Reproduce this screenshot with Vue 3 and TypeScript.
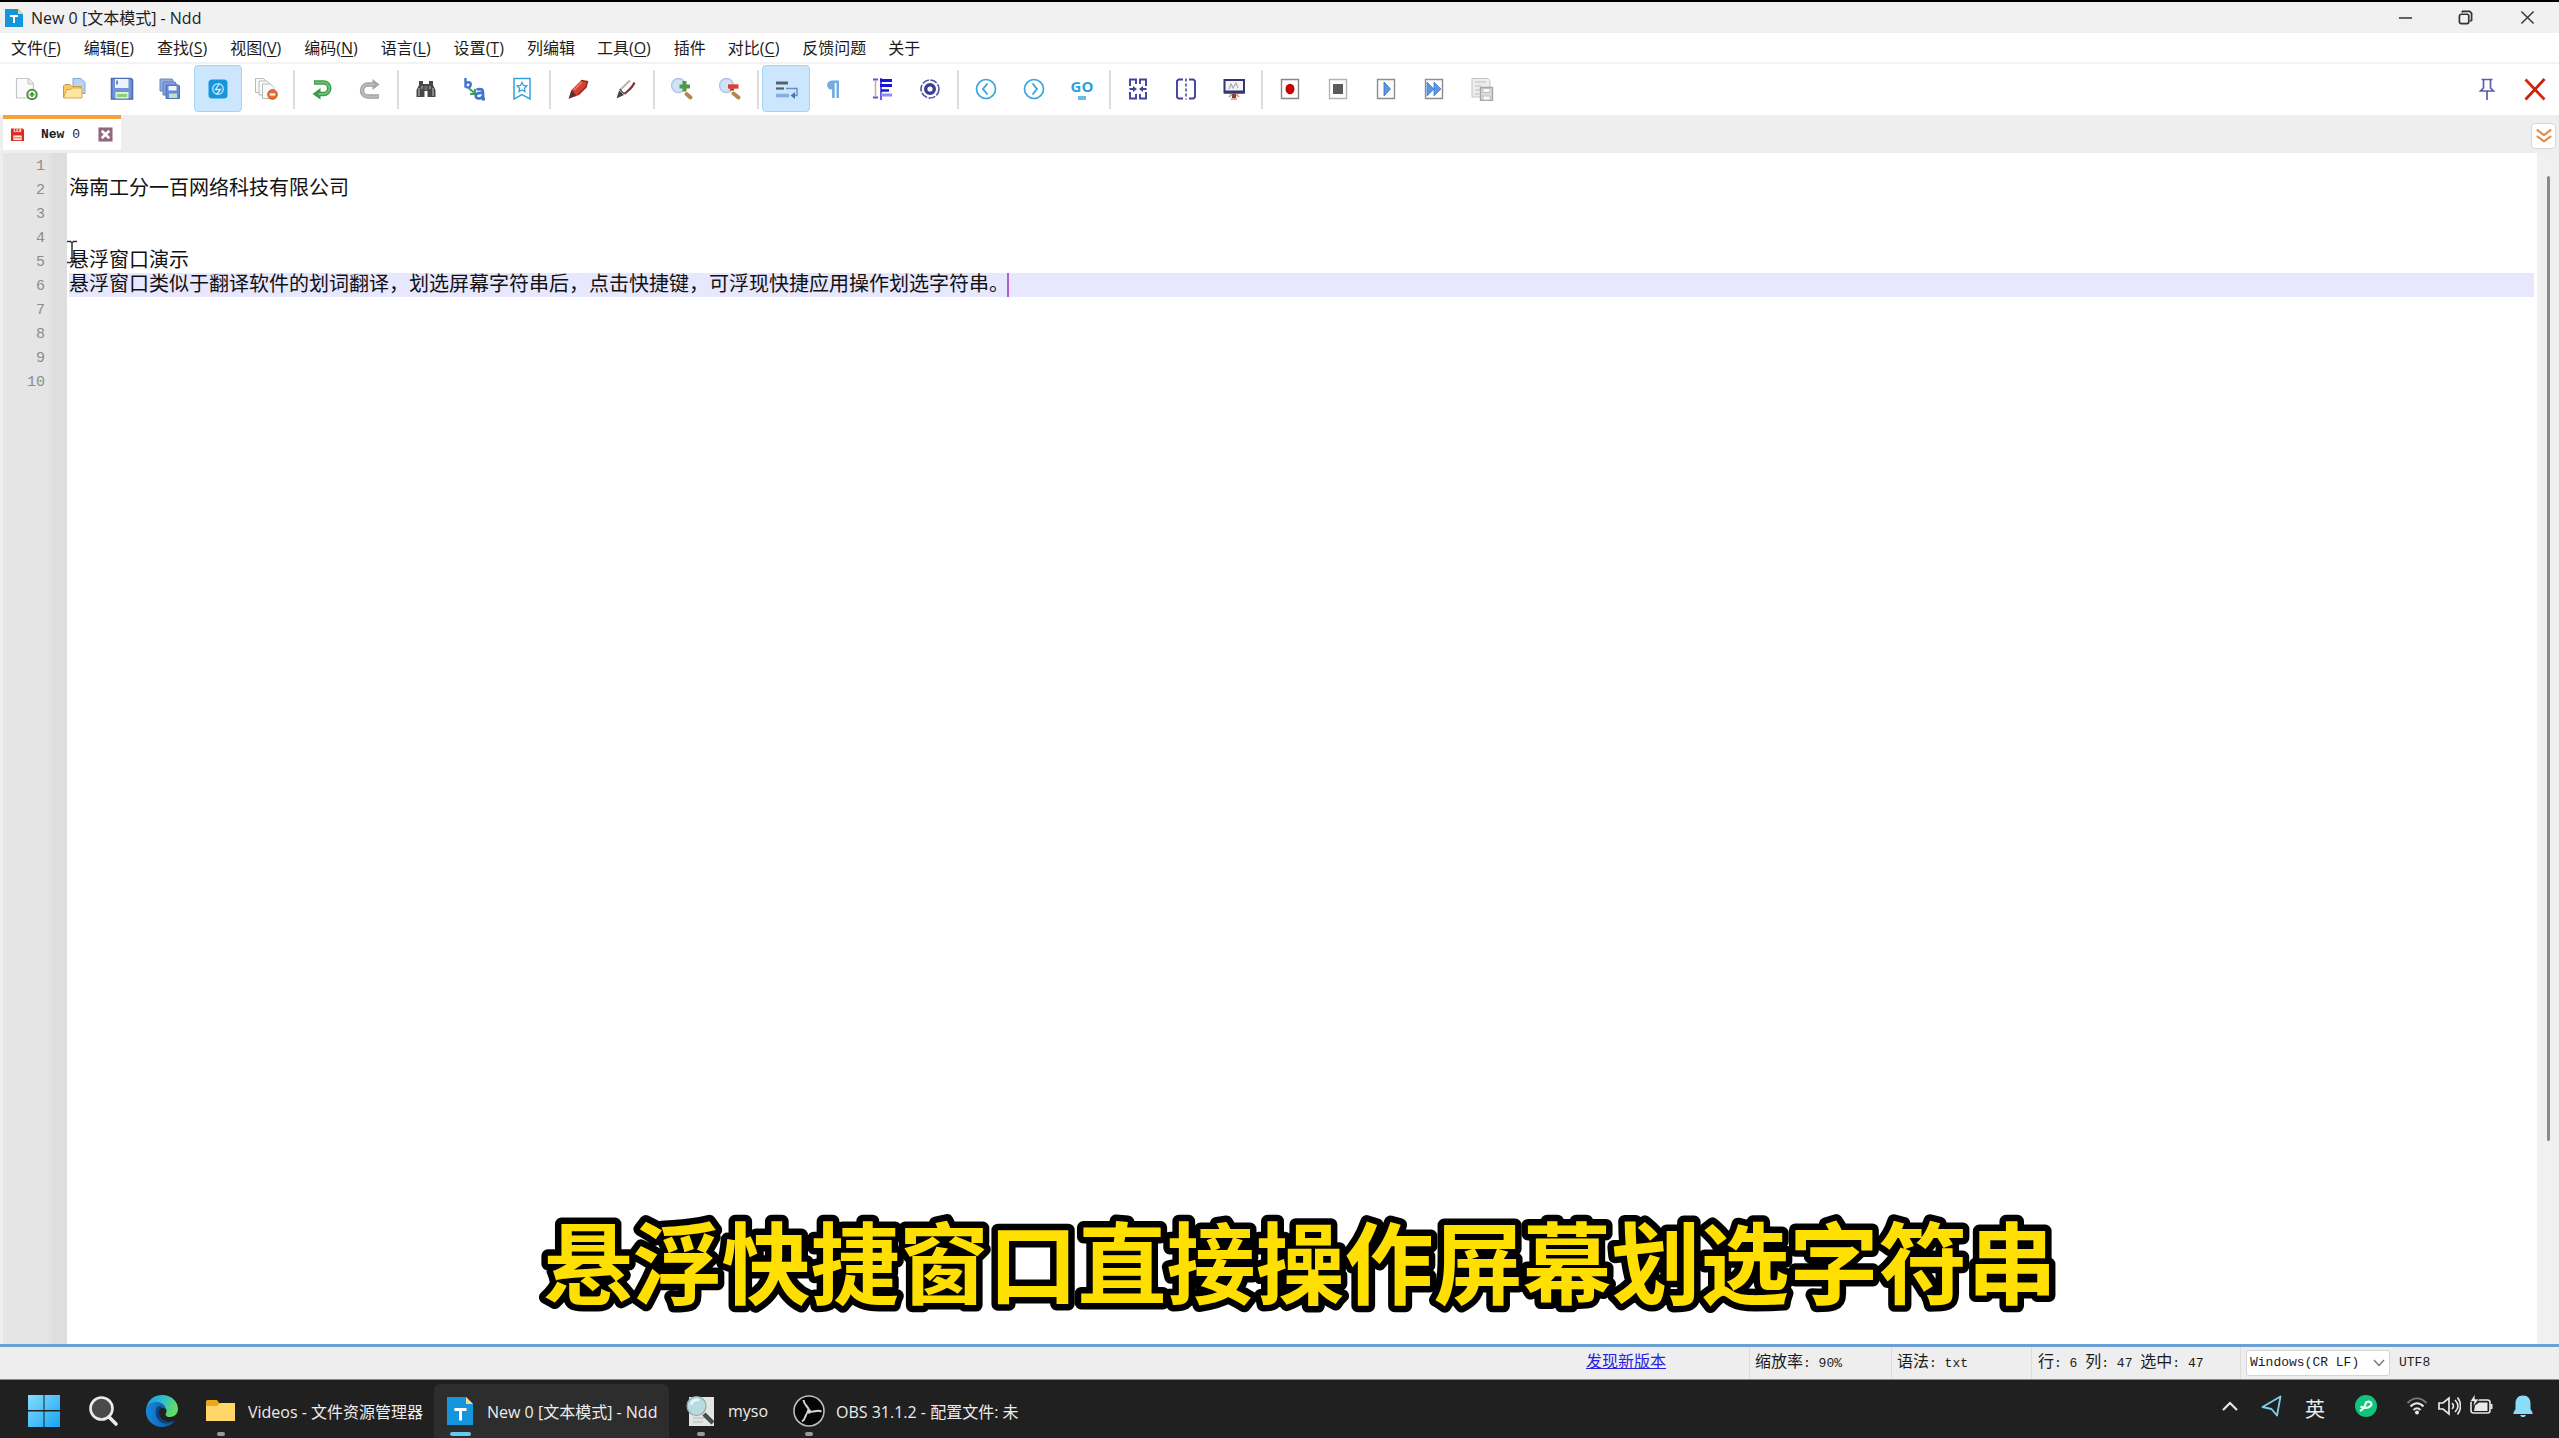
<script setup lang="ts">
import { ref } from 'vue'

interface Tool {
  icon: string
  label: string
  active?: boolean
}

const icons: Record<string, string> = {
  newFile:
    '<path d="M2.500 1.500h12l5 5v14.500h-17z" fill="#fbfbfb" stroke="#c6c6c6" stroke-width="1.200"/><path d="M14 1.500v5.500h5.500" fill="#eee" stroke="#c6c6c6"/><circle cx="18" cy="17.500" r="4.700" fill="#fff" stroke="#4f9140" stroke-width="2"/><path d="M18 15v5M15.500 17.500h5" stroke="#4f9140" stroke-width="1.800"/>',
  open:
    '<path d="M11 1.500h8l4 4v11H11z" fill="#b9d3f3" stroke="#7ea6dc"/><path d="M1.500 20.500V9l1.500-1.500h5l2 2h9.500v11z" fill="#f6cb66" stroke="#cf9838"/><path d="M1.500 21l3-8.500h4l2-1.500h9.500v10z" fill="#fde6a2" stroke="#d9a748"/>',
  save:
    '<path d="M1.500 1.500h19.500l1.500 1.500v19H1.500z" fill="#7193dc" stroke="#4d6cb4" stroke-width="1.600"/><path d="M5 2h13.500v9H5z" fill="#edf3fd"/><path d="M7 3.500v4" stroke="#536fb0" stroke-width="1.600"/><path d="M5.500 15h13v6.500h-13z" fill="#dcf2d3"/><path d="M7 17h10v3H7z" fill="#8bcf78"/>',
  saveAll:
    '<path d="M2 2h12l1 1v11H2z" fill="#93aee0" stroke="#6b87c2"/><path d="M5 5h12l1 1v12H5z" fill="#87a5e0" stroke="#5e7dbf"/><path d="M8 8h12.500l1 1v12.500H8z" fill="#668bd8" stroke="#4e6fb8"/><path d="M10.500 9h8v4.500h-8z" fill="#edf3fd"/><path d="M11 16.500h8v4.500h-8z" fill="#bfe5b4"/>',
  sync:
    '<rect x="2.500" y="2.500" width="19" height="19" rx="3.500" fill="#1595dc"/><circle cx="12" cy="12" r="5.300" fill="none" stroke="#a9dcf7" stroke-width="1.500"/><path d="M13.500 6.500l-4 6h5l-4 5" fill="none" stroke="#d6effb" stroke-width="1.300"/>',
  closeAll:
    '<g fill="#fafafa" stroke="#b9b9b9"><path d="M1.500 1.500h8l3 3v11h-11z"/><path d="M5 4h8l3 3v11H5z"/><path d="M8.500 7h8l3.500 3.500v11H8.500z"/></g><circle cx="18.500" cy="17.500" r="4.800" fill="#e66f25" stroke="#c5551a"/><path d="M15.700 17.500h5.600" stroke="#fff" stroke-width="2"/>',
  undo:
    '<path d="M4 5.500h9.500a5 5 0 0 1 0 11.500H9" fill="none" stroke="#3e9a48" stroke-width="4.600"/><path d="M10.500 11v11.500L2.500 17z" fill="#3e9a48"/><path d="M5 5.500h8.500a5 5 0 0 1 0 11.500H8" fill="none" stroke="#6dc06f" stroke-width="2"/>',
  redo:
    '<path d="M21 19.500H10a5.300 5.300 0 0 1 0-12h6" fill="none" stroke="#9f9f9f" stroke-width="4.400"/><path d="M14.500 2v11l7-5.500z" fill="#a5a5a5"/><path d="M20.500 19.500H10a5.300 5.300 0 0 1 0-12h7" fill="none" stroke="#bebebe" stroke-width="2"/>',
  find:
    '<path d="M5 4h4v3h6V4h4v4l2.500 5v7h-8v-6h-3v6h-8v-7L5 8z" fill="#474747"/><path d="M5 11v8M19 11v8M8 9v3M16 9v3" stroke="#9a9a9a" stroke-width="1.500"/><path d="M10.500 9h3v4h-3z" fill="#6f6f6f"/>',
  replace:
    '<path d="M3.500 1v9.500M3.500 6.500c3-2.500 6-1 5 2s-4 2.500-5 .5" fill="none" stroke="#3f74d2" stroke-width="2.400"/><path d="M7 11.500l5 4M8 17h5v-5" fill="none" stroke="#4a9c52" stroke-width="2.200"/><path d="M14.500 12.500c6-1.500 6.500.5 6.500 4v5.500h2M21 16c-6-.5-8 1.500-7 4s6 1.500 7-1" fill="none" stroke="#3f74d2" stroke-width="2.800"/>',
  bookmark:
    '<path d="M4 1.500h16v20.500l-8-4.500-8 4.500z" fill="none" stroke="#35a2dc" stroke-width="1.500"/><path d="M12 5.500l1.500 3 3.300.4-2.400 2.300.6 3.300-3-1.600-3 1.600.6-3.300-2.400-2.300 3.300-.4z" fill="none" stroke="#35a2dc" stroke-width="1.300"/>',
  markRed:
    '<path d="M3 21l2.500-8L15 3.500l6.500 1L20 10l-9 9z" fill="#d9402c"/><path d="M15 3.500l6.500 1L20 10l-8 8" fill="none" stroke="#8d2a22" stroke-width="1.500"/><path d="M2.500 22l3-9 5 5.500z" fill="#533"/><path d="M8 13l8-8" stroke="#f2796a" stroke-width="1.700"/>',
  markClear:
    '<path d="M6 13L16 3.500" stroke="#b5b5b5" stroke-width="2"/><path d="M20.500 5.500c-2 5-5 7-9.500 11" fill="none" stroke="#88333b" stroke-width="2.200"/><path d="M6 12c1.500 3.500 3 4.500 6 4.500" fill="none" stroke="#555" stroke-width="1.800"/><path d="M2.500 21.500l2.500-8 5 4.500z" fill="#444"/>',
  zoomIn:
    '<circle cx="8.500" cy="8.500" r="7" fill="#cfe2f7" stroke="#a9c6e6" stroke-width="1.400"/><path d="M16.500 17l4 3.500" stroke="#ba8548" stroke-width="4" stroke-linecap="round"/><path d="M14.500 4v10.500M9.500 9.500h10.500" stroke="#4f9a47" stroke-width="4"/>',
  zoomOut:
    '<circle cx="8.500" cy="8.500" r="7" fill="#cfe2f7" stroke="#a9c6e6" stroke-width="1.400"/><path d="M15.500 16.500l5 4" stroke="#ba8548" stroke-width="4" stroke-linecap="round"/><path d="M10 9.500h10.500" stroke="#de4034" stroke-width="4.400"/><path d="M12 12.500h4" stroke="#b3302b" stroke-width="2"/>',
  wrap:
    '<path d="M2 6h12" stroke="#56616d" stroke-width="3"/><path d="M2 11.500h8" stroke="#56616d" stroke-width="2.200"/><path d="M12 11.500h11v7h-3.500" fill="none" stroke="#668dc4" stroke-width="1.400"/><path d="M21 15v7l-4.500-3.500z" fill="#4a75b5"/><path d="M2 18.500h13" stroke="#86aee2" stroke-width="3.600"/>',
  pilcrow:
    '<path d="M6.500 3.500H17V21h-2.500V6h-1.800v15H10v-8.500C3.500 13 3.500 3.500 10 3.500z" fill="#73abe2"/>',
  indent:
    '<path d="M3 2.500h5M3 20.500h5" stroke="#5553e8" stroke-width="2"/><path d="M5.500 4v15" stroke="#dfa08d" stroke-width="1.500"/><path d="M11 1v22" stroke="#4e4be0" stroke-width="1.800"/><path d="M10 3.500h12M10 8.500h12" stroke="#1a14df" stroke-width="3"/><path d="M11 13.500h8" stroke="#1a14df" stroke-width="2.500"/><path d="M11 18h11" stroke="#8f8df5" stroke-width="3"/>',
  monitor:
    '<circle cx="12" cy="12" r="9" fill="none" stroke="#55559c" stroke-width="1.600" stroke-dasharray="7 1.500"/><circle cx="12" cy="12" r="4.300" fill="none" stroke="#3c3c90" stroke-width="3.400"/>',
  prev:
    '<circle cx="12" cy="12" r="9.500" fill="none" stroke="#3aa6db" stroke-width="1.700"/><path d="M13.500 6.500L9 12l4.500 5.500" fill="none" stroke="#3aa6db" stroke-width="1.900"/>',
  next:
    '<circle cx="12" cy="12" r="9.500" fill="none" stroke="#3aa6db" stroke-width="1.700"/><path d="M10.500 6.500L15 12l-4.500 5.500" fill="none" stroke="#3aa6db" stroke-width="1.900"/>',
  split:
    '<g fill="none" stroke="#42429a" stroke-width="1.900"><path d="M10 7V2.500H4V9M4 15v6.500h6V17M14 7V2.500h6V9M20 15v6.500h-6V17"/><path d="M3.500 12H8M20.500 12H16"/></g><path d="M7 9l4 3-4 3zM17 9l-4 3 4 3z" fill="#42429a"/>',
  columns:
    '<path d="M9 2.500H4.500L3 4v16l1.500 1.500H9M15 2.500h4.500L21 4v16l-1.500 1.500H15" fill="none" stroke="#42429a" stroke-width="1.900"/><path d="M12 1.500v21" stroke="#42429a" stroke-width="1.500" stroke-dasharray="3 2"/>',
  screen:
    '<path d="M2.500 3h19.500v12.500H2.500z" fill="#f4f4f8" stroke="#35356f" stroke-width="2"/><path d="M2 15h20.500" stroke="#35356f" stroke-width="3"/><path d="M7 12l2-5 2 4 3-5 2 5" fill="none" stroke="#aaaab8" stroke-width="1.200"/><path d="M10 17h4v4h-4z" fill="#7d4040"/><path d="M7 20l3-3M17 20l-3-3M9 22h6" stroke="#d3946f" stroke-width="1.600"/>',
  record:
    '<path d="M3.500 2.500h17v19h-17z" fill="#fdfdfd" stroke="#8b8585" stroke-width="1.400"/><ellipse cx="12" cy="12" rx="4.500" ry="5.200" fill="#c80000"/>',
  stop:
    '<path d="M3.500 2.500h17v19h-17z" fill="#fdfdfd" stroke="#b5b5b5" stroke-width="1.400"/><path d="M7 7h10v10H7z" fill="#5b5b5b"/>',
  play:
    '<path d="M3.500 2.500h17v19h-17z" fill="#fdfdfd" stroke="#8d8d8d" stroke-width="1.400"/><path d="M10 5l6.500 7-6.500 7z" fill="#5c96e6" stroke="#356fc3" stroke-width=".8"/>',
  playAll:
    '<path d="M3.500 2.500h17v19h-17z" fill="#fdfdfd" stroke="#8d8d8d" stroke-width="1.400"/><path d="M5 5l7 7-7 7zM12 5l7 7-7 7z" fill="#5c96e6" stroke="#4180d2" stroke-width=".8"/>',
  saveMacro:
    '<path d="M2 1.500h16l2 2V20H2z" fill="#ededed" stroke="#c5c5c5"/><path d="M5 5h11M5 9h6M5 13h5M5 17h4" stroke="#cecece" stroke-width="1.500"/><path d="M10.500 10.500h12v13h-12z" fill="#dcdcdc" stroke="#a5a5a5" stroke-width="1.400"/><path d="M13 11.500h7v4h-7zM13 19h7v4h-7z" fill="#fafafa" stroke="#b5b5b5" stroke-width=".8"/>',
  pin:
    '<path d="M6.500 2.500h11M8.500 3v8l-3 3h13l-3-3V3M12 14v9" fill="none" stroke="#5c5cae" stroke-width="1.700"/>',
  closeRed:
    '<path d="M2.500 2.500l19 20" stroke="#d72814" stroke-width="2.800"/><path d="M21.500 2L2.500 22.500" stroke="#c52010" stroke-width="2.800"/>'
}

const menus: [string, string][] = [
  ['文件', 'F'], ['编辑', 'E'], ['查找', 'S'], ['视图', 'V'], ['编码', 'N'], ['语言', 'L'], ['设置', 'T'],
  ['列编辑', ''], ['工具', 'O'], ['插件', ''], ['对比', 'C'], ['反馈问题', ''], ['关于', '']
]

const toolGroups: Tool[][] = [
  [
    { icon: 'newFile', label: '新建' },
    { icon: 'open', label: '打开' },
    { icon: 'save', label: '保存' },
    { icon: 'saveAll', label: '全部保存' },
    { icon: 'sync', label: '自动同步', active: true },
    { icon: 'closeAll', label: '全部关闭' }
  ],
  [
    { icon: 'undo', label: '撤销' },
    { icon: 'redo', label: '重做' }
  ],
  [
    { icon: 'find', label: '查找' },
    { icon: 'replace', label: '替换' },
    { icon: 'bookmark', label: '书签' }
  ],
  [
    { icon: 'markRed', label: '标记' },
    { icon: 'markClear', label: '清除标记' }
  ],
  [
    { icon: 'zoomIn', label: '放大' },
    { icon: 'zoomOut', label: '缩小' }
  ],
  [
    { icon: 'wrap', label: '自动换行', active: true },
    { icon: 'pilcrow', label: '显示空白' },
    { icon: 'indent', label: '缩进线' },
    { icon: 'monitor', label: '监视' }
  ],
  [
    { icon: 'prev', label: '上一处' },
    { icon: 'next', label: '下一处' },
    { icon: 'go', label: '跳转' }
  ],
  [
    { icon: 'split', label: '合并视图' },
    { icon: 'columns', label: '分栏' },
    { icon: 'screen', label: '十六进制' }
  ],
  [
    { icon: 'record', label: '录制宏' },
    { icon: 'stop', label: '停止录制' },
    { icon: 'play', label: '播放宏' },
    { icon: 'playAll', label: '多次播放' },
    { icon: 'saveMacro', label: '保存宏' }
  ]
]

const text = ref(
  [
    '',
    '海南工分一百网络科技有限公司',
    '',
    '',
    '悬浮窗口演示',
    '悬浮窗口类似于翻译软件的划词翻译，划选屏幕字符串后，点击快捷键，可浮现快捷应用操作划选字符串。',
    '', '', '', ''
  ].join('\n')
)

const eol = ref('Windows(CR LF)')

// Chinese and Latin runs are set in different sizes in the status bar.
const runs = (s: string) => s.split(/([\u4e00-\u9fff]+)/).filter(Boolean)
const isHan = (s: string) => /[\u4e00-\u9fff]/.test(s)
</script>

<template>
  <div class="screen">
    <header class="titlebar">
      <svg class="app-icon" viewBox="0 0 18 18"><path d="M0 0h13l5 5v13H0z" fill="#1496dc" /><path d="M13 0l5 5h-5z" fill="#f2d58d" /><path d="M5 7h8M9 7v7" stroke="#fff" stroke-width="2" /></svg>
      <h1>New 0 [文本模式] - Ndd</h1>
      <div class="win-buttons">
        <button aria-label="最小化"><svg viewBox="0 0 16 16"><path d="M1 8.500h14" stroke="#333" stroke-width="1.600" /></svg></button>
        <button aria-label="还原"><svg viewBox="0 0 16 16"><path d="M4 2.500l1-1h7.500l2 2V11l-1.500 1" fill="none" stroke="#333" stroke-width="1.800" /><rect x="1.500" y="4.500" width="10" height="10" rx="2" fill="none" stroke="#333" stroke-width="1.800" /></svg></button>
        <button aria-label="关闭"><svg viewBox="0 0 16 16"><path d="M1.500 1.500l13 13M14.500 1.500l-13 13" stroke="#333" stroke-width="1.500" /></svg></button>
      </div>
    </header>

    <nav class="menubar">
      <button v-for="[name, key] in menus" :key="name" :class="{ keyed: key }">{{ name }}<template v-if="key">(<u>{{ key }}</u>)</template></button>
    </nav>

    <div class="toolbar">
      <div v-for="(group, i) in toolGroups" :key="i" class="tool-group">
        <button v-for="tool in group" :key="tool.icon" :class="{ active: tool.active }" :aria-label="tool.label">
          <span v-if="tool.icon === 'go'" class="go">GO</span>
          <svg v-else viewBox="0 0 24 24" v-html="icons[tool.icon]" />
        </button>
      </div>
      <div class="tool-end">
        <button aria-label="置顶"><svg viewBox="0 0 24 24" v-html="icons.pin" /></button>
        <button aria-label="关闭文件"><svg viewBox="0 0 24 24" v-html="icons.closeRed" /></button>
      </div>
    </div>

    <div class="tabs">
      <div class="tab">
        <svg class="tab-file" viewBox="0 0 16 16"><path d="M1 1.500h12.500L15 3v12H1z" fill="#d92c20" /><path d="M4 1.500h8v4H4z" fill="#f7c5bf" /><path d="M6 2.500v2M9 2.500v2" stroke="#c92a1e" stroke-width="1.500" /><path d="M3.500 9h9v5h-9z" fill="#fbe4e1" /><path d="M4 11.500h8" stroke="#e8776e" stroke-width="1.200" /></svg>
        <span class="tab-name"><b>New</b> 0</span>
        <button aria-label="关闭标签"><svg viewBox="0 0 16 16"><path d="M.5 .5h15v15H.5z" fill="#93677d" /><path d="M4 4l8 8M12 4l-8 8" stroke="#fff" stroke-width="2.800" /></svg></button>
      </div>
      <button class="tab-list" aria-label="标签列表"><svg viewBox="0 0 20 20"><path d="M2 3l8 6 8-6M2 10l8 6 8-6" fill="none" stroke="#e48c4d" stroke-width="2.400" /></svg></button>
    </div>

    <main class="editor">
      <ol class="gutter">
        <li v-for="n in 10" :key="n">{{ n }}</li>
      </ol>
      <div class="page">
        <div class="current-line"></div>
        <textarea v-model="text" aria-label="文本内容" spellcheck="false"></textarea>
        <div class="caret"></div>
        <svg class="ibeam" viewBox="0 0 12 24"><path d="M1 1.500h3.500L6 3l1.500-1.500H11M6 3v18M1 22.500h3.500L6 21l1.500 1.500H11" fill="none" stroke="#333" stroke-width="1.500" /></svg>
      </div>
      <div class="scroll"><div class="thumb"></div></div>
      <svg class="subtitle"><text x="50%" y="96">悬浮快捷窗口直接操作屏幕划选字符串</text></svg>
    </main>

    <footer class="status">
      <div class="cell update"><a href="#update">发现新版本</a></div>
      <div class="cell zoom"><span v-for="r in runs('缩放率: 90%')" :key="r" :class="{ han: isHan(r) }">{{ r }}</span></div>
      <div class="cell syntax"><span v-for="r in runs('语法: txt')" :key="r" :class="{ han: isHan(r) }">{{ r }}</span></div>
      <div class="cell position"><span v-for="(r, i) in runs('行: 6 列: 47 选中: 47')" :key="i" :class="{ han: isHan(r) }">{{ r }}</span></div>
      <div class="cell encoding">
        <label class="eol">
          <select v-model="eol" aria-label="换行符"><option>Windows(CR LF)</option></select>
          <svg viewBox="0 0 12 8"><path d="M1 1l5 5.500L11 1" fill="none" stroke="#777" stroke-width="1.400" /></svg>
        </label>
        <span>UTF8</span>
      </div>
    </footer>

    <div class="taskbar">
      <button class="launch" aria-label="开始">
        <svg viewBox="0 0 32 32"><defs><linearGradient id="win" x1="0" y1="0" x2="1" y2="1" gradientUnits="objectBoundingBox"><stop offset="0" stop-color="#86dcfc" /><stop offset="1" stop-color="#16a4f6" /></linearGradient></defs><path d="M0 0h15.500v15H0zM16.500 0H32v15H16.500zM0 16.500h15.500V32H0zM16.500 16.500H32V32H16.500z" fill="url(#win)" /></svg>
      </button>
      <button class="launch" aria-label="搜索">
        <svg viewBox="0 0 32 32"><circle cx="14.500" cy="13.500" r="11" fill="#4a4a4a" stroke="#ececec" stroke-width="2.600" /><path d="M22 22l7 7" stroke="#ececec" stroke-width="3.600" stroke-linecap="round" /></svg>
      </button>
      <button class="launch" aria-label="Edge">
        <svg viewBox="0 0 32 32">
          <defs>
            <linearGradient id="edgeTop" x1="0" x2="1" y1="0" y2=".3"><stop offset="0" stop-color="#1f93dc" /><stop offset=".5" stop-color="#27bdd5" /><stop offset="1" stop-color="#62dc62" /></linearGradient>
            <linearGradient id="edgeLow" x1="0" x2="1"><stop offset="0" stop-color="#1688dc" /><stop offset="1" stop-color="#124f9c" /></linearGradient>
          </defs>
          <path d="M0 15C1 5 8 0 16 0c10 0 16 7 16 14 0 5-4 8-8 8-4 0-5-2-4-4 2-3-1-7-5-7C8 11 2 14 0 18z" fill="url(#edgeTop)" />
          <path d="M0 17c0-7 6-11 12-10 6 1 8 5 8 8-2-3-5-3-7 0-3 5 2 13 10 12 3 0 5-1 6-2C26 30 21 32 16 32 7 32 0 25 0 17z" fill="url(#edgeLow)" />
          <path d="M10 14c-2 9 5 17 14 14l5-3c-5 4-16 1-16-8 0-3 2-5 4-5-3-2-6-1-7 2z" fill="#0e3f7e" />
        </svg>
      </button>
      <button class="task folder">
        <svg viewBox="0 0 32 32"><path d="M1 6l1.500-1H12l2.500 3.500H29L30 10v16H1z" fill="#eba81f" /><path d="M1 11h11l3-3h15v18H1z" fill="#ffd768" /></svg>
        <span class="label">Videos - 文件资源管理器</span>
      </button>
      <button class="task ndd current">
        <svg viewBox="0 0 32 32"><path d="M3 2h19l7 7v21H3z" fill="#1496dc" /><path d="M22 2l7 7h-7z" fill="#f2dc93" /><path d="M10.500 14.500h12M16.500 14.500v11" stroke="#fff" stroke-width="3" /></svg>
        <span class="label">New 0 [文本模式] - Ndd</span>
      </button>
      <button class="task myso">
        <svg viewBox="0 0 32 32"><path d="M4 2h25v29H4z" fill="#e3e4e4" /><path d="M8 23h14M8 27h10" stroke="#c5c5c5" stroke-width="1.500" /><path d="M19 19l9 9" stroke="#4b4b4b" stroke-width="4.500" /><circle cx="11.500" cy="11" r="9.500" fill="#b9dbe0" stroke="#8da9ae" stroke-width="1.200" /><path d="M6 10c1-4 4-6 8-5" fill="none" stroke="#e6f5f6" stroke-width="2.500" /></svg>
        <span class="label">myso</span>
      </button>
      <button class="task obs">
        <svg viewBox="0 0 32 32"><circle cx="16" cy="16" r="15" fill="#050505" stroke="#bdbdbd" stroke-width="1.600" /><g fill="none" stroke="#d5d5d5" stroke-width="2"><path d="M16 16c0-5-5-5-5.500-11" /><path d="M16 16c-4.500 2.500-2 7-7 10.500" /><path d="M16 16c4.500 2.500 7-2 12.500.5" /></g><circle cx="16" cy="16.500" r="2.200" fill="#d5d5d5" /></svg>
        <span class="label">OBS 31.1.2 - 配置文件: 未</span>
      </button>

      <div class="tray">
        <button class="up" aria-label="显示隐藏的图标"><svg viewBox="0 0 24 24"><path d="M5 16l7-7 7 7" fill="none" stroke="#e8e8e8" stroke-width="2.200" /></svg></button>
        <button class="plane" aria-label="位置"><svg viewBox="0 0 24 24"><path d="M20.500 2.500L2.500 13l9 2 5.500 6.500z" fill="none" stroke="#79d2ee" stroke-width="1.800" stroke-linejoin="round" /></svg></button>
        <button class="ime">英</button>
        <button class="green" aria-label="助手"><svg viewBox="0 0 24 24"><circle cx="12" cy="12" r="11" fill="#12c37e" /><path d="M6 17c3-1.500 5-4 6-8.500 4-2.500 7 1 4.500 3.500-2 2-6 2.500-10 .5" fill="none" stroke="#e6fff4" stroke-width="2.200" /></svg></button>
        <button class="system" aria-label="网络、音量和电池">
          <svg viewBox="0 0 24 24"><g fill="none" stroke-width="2"><path d="M2.500 9c6-6 13-6 19 0" stroke="#777" /><path d="M5.500 12.500c4-4.500 9-4.500 13 0M8.500 16c2.500-2.500 4.500-2.500 7 0" stroke="#e8e8e8" /></g><circle cx="12" cy="18.500" r="2" fill="#e8e8e8" /></svg>
          <svg viewBox="0 0 24 24"><path d="M2 9h4l6-5v16l-6-5H2z" fill="none" stroke="#e8e8e8" stroke-width="1.700" /><path d="M15 9c2 2 2 4 0 6M18 6c4 4 4 8 0 12M20.500 3.500c4 5 4 12 0 17" fill="none" stroke="#e8e8e8" stroke-width="1.600" /></svg>
          <svg viewBox="0 0 24 24"><rect x="2" y="6" width="19" height="13" rx="2.500" fill="none" stroke="#e8e8e8" stroke-width="1.600" /><path d="M5 17l1-5.500 4-3h8.500V17zM21.500 10h2v5h-2z" fill="#e8e8e8" /><path d="M6 0L1 7.500h4l-1 5.500 6-8H6z" fill="#e8e8e8" stroke="#202020" stroke-width=".7" /></svg>
        </button>
        <button class="bell" aria-label="通知"><svg viewBox="0 0 24 24"><path d="M12 1.500c-5 0-7.500 3.500-7.500 8V15l-2 3.500V20h19v-1.500l-2-3.500V9.500c0-4.500-2.500-8-7.500-8z" fill="#8adcf8" /><path d="M9 21h6l-1.500 2h-3z" fill="#8adcf8" /></svg></button>
      </div>
    </div>
  </div>
</template>

<style>
body {
  margin: 0;
}
</style>

<style scoped>
.screen {
  display: flex;
  flex-direction: column;
  height: 100vh;
  box-sizing: border-box;
  border-top: 2px solid #000;
  overflow: hidden;
  background: #eeeeee;
  color: #1c1c1c;
  font-family: "Open Sans", "Noto Sans CJK SC", sans-serif;
  font-size: 16px;
}
button {
  display: flex;
  align-items: center;
  justify-content: center;
  margin: 0;
  padding: 0;
  border: 0;
  background: none;
  color: inherit;
  font: inherit;
}
svg {
  display: block;
  flex: none;
}

.titlebar {
  flex: none;
  display: flex;
  align-items: center;
  height: 31px;
  padding-left: 5px;
  background: #f1f1f1;
}
.app-icon {
  width: 18px;
  height: 18px;
}
.titlebar h1 {
  flex: 1;
  margin: 0 0 0 8px;
  font-size: 16px;
  font-weight: 400;
  line-height: 30px;
}
.win-buttons {
  display: flex;
}
.win-buttons button {
  width: 60px;
  height: 30px;
}
.win-buttons button:last-child {
  width: 64px;
}
.win-buttons svg {
  width: 15px;
  height: 15px;
}

.menubar {
  flex: none;
  display: flex;
  gap: 22px;
  height: 29px;
  padding-left: 11px;
  border-bottom: 2px solid #f3f3f3;
  background: #fff;
}
.menubar button {
  line-height: 30px;
}
.menubar .keyed {
  padding-right: 1px;
}
.menubar u {
  text-underline-offset: 2px;
}

.toolbar {
  flex: none;
  display: flex;
  height: 51px;
  padding-left: 2px;
  background: #fff;
}
.tool-group {
  position: relative;
  display: flex;
  margin-right: 8px;
}
.tool-group:not(:nth-last-child(2))::after {
  content: "";
  position: absolute;
  top: 6px;
  right: -5px;
  width: 2px;
  height: 39px;
  background: #dcdcdc;
}
.toolbar button {
  box-sizing: border-box;
  width: 48px;
  height: 47px;
  margin-top: 1px;
  border-radius: 4px;
}
.toolbar button.active {
  border: 1px solid #a5d3f5;
  background: #cce6fd;
}
.toolbar svg {
  width: 24px;
  height: 24px;
}
.go {
  display: flex;
  flex-direction: column;
  align-items: center;
  color: #2f9fd9;
  font-size: 15px;
  font-weight: 700;
  line-height: 17px;
}
.go::after {
  content: "";
  width: 8px;
  height: 4px;
  margin-top: 1px;
  background: #6bbce8;
}
.tool-end {
  display: flex;
  margin-left: auto;
}

.tabs {
  flex: none;
  display: flex;
  justify-content: space-between;
  height: 38px;
  padding: 0 3px;
}
.tab {
  display: flex;
  align-items: center;
  box-sizing: border-box;
  height: 35px;
  padding: 0 8px 0 7px;
  border-top: 4px solid #f6a33b;
  background: #fff;
}
.tab svg {
  width: 15px;
  height: 15px;
}
.tab-name {
  width: 40px;
  margin: 0 17px 0 16px;
  font-family: "Liberation Mono", monospace;
  font-size: 13px;
  line-height: 16px;
  white-space: nowrap;
}
.tab-list {
  width: 25px;
  height: 26px;
  margin-top: 8px;
  box-sizing: border-box;
  border: 1px solid #cfdbe3;
  border-radius: 4px;
  background: #fff;
}
.tab-list svg {
  width: 20px;
  height: 18px;
}

.editor {
  position: relative;
  flex: 1;
  display: flex;
  min-height: 0;
  padding-left: 3px;
  background: #eeeeee;
}
.gutter {
  flex: none;
  box-sizing: border-box;
  width: 64px;
  margin: 0;
  padding: 2px 22px 0 0;
  background: linear-gradient(90deg, #e5e5e5 70%, #dedede 80%);
  color: #8c8c8c;
  list-style: none;
  text-align: right;
  font-family: "Liberation Mono", monospace;
  font-size: 15px;
  line-height: 24px;
}
.page {
  position: relative;
  flex: 1;
  background: #fff;
}
.page textarea {
  position: relative;
  display: block;
  box-sizing: border-box;
  width: 100%;
  height: 100%;
  margin-top: -2px;
  padding: 0 0 0 2px;
  border: 0;
  outline: 0;
  resize: none;
  overflow: hidden;
  background: transparent;
  color: #111;
  font-family: "Noto Sans CJK SC", sans-serif;
  font-size: 20px;
  line-height: 24px;
}
.current-line {
  position: absolute;
  top: 120px;
  left: 2px;
  right: 3px;
  height: 24px;
  background: #e7e7fd;
}
.caret {
  position: absolute;
  top: 120px;
  left: 940px;
  width: 2px;
  height: 24px;
  background: #b45fd0;
}
.ibeam {
  position: absolute;
  top: 87px;
  left: -1px;
  width: 12px;
  height: 24px;
}
.scroll {
  display: flex;
  justify-content: center;
  width: 22px;
  background: #f0f0f0;
}
.thumb {
  width: 3px;
  height: 81%;
  margin-top: 23px;
  border-radius: 2px;
  background: #8a8a8a;
}
.subtitle {
  position: absolute;
  left: 41px;
  bottom: 13px;
  width: calc(100% - 41px);
  height: 130px;
  fill: #ffdf00;
  stroke: #000;
  stroke-width: 13px;
  stroke-linejoin: round;
  paint-order: stroke;
  font-family: "Noto Sans CJK SC", sans-serif;
  font-size: 89px;
  font-weight: 700;
  text-anchor: middle;
  pointer-events: none;
}

.status {
  flex: none;
  display: flex;
  justify-content: flex-end;
  box-sizing: border-box;
  height: 36px;
  border-top: 3px solid #6ba0d4;
  border-bottom: 1px solid #8a8a8a;
  background: #eeeeee;
  font-family: "Liberation Mono", "Noto Sans CJK SC", monospace;
  font-size: 13px;
  line-height: 32px;
  white-space: pre;
}
.cell {
  box-sizing: border-box;
  padding-left: 5px;
  border-left: 1px solid #dcdcdc;
}
.update {
  width: 163px;
  padding-left: 0;
  border: 0;
}
.update a {
  color: #2a1fe0;
  font-size: 16px;
}
.han {
  font-size: 16px;
}
.zoom {
  width: 142px;
}
.syntax {
  width: 140px;
}
.position {
  width: 209px;
  padding-left: 6px;
}
.encoding {
  display: flex;
  align-items: center;
  gap: 9px;
  width: 319px;
}
.eol {
  display: block;
  position: relative;
  width: 144px;
  height: 26px;
  line-height: 0;
}
.eol select {
  display: block;
  box-sizing: border-box;
  width: 100%;
  height: 26px;
  padding: 0 0 0 3px;
  border: 1px solid #d5d5d5;
  border-radius: 3px;
  appearance: none;
  background: #fff;
  color: #1c1c1c;
  font: inherit;
  line-height: 20px;
}
.eol svg {
  position: absolute;
  top: 9px;
  right: 5px;
  width: 12px;
  height: 8px;
}

.taskbar {
  flex: none;
  display: flex;
  height: 58px;
  padding-left: 14px;
  background: #202020;
  color: #ececec;
}
.launch {
  width: 59px;
  height: 62px;
}
.launch svg,
.task svg {
  width: 32px;
  height: 32px;
}
.task {
  position: relative;
  justify-content: flex-start;
  box-sizing: border-box;
  height: 54px;
  margin-top: 4px;
  padding-left: 10px;
  border-radius: 6px 6px 0 0;
}
.task .label {
  margin-left: 11px;
  white-space: nowrap;
}
.task::after {
  content: "";
  position: absolute;
  left: 22px;
  bottom: 2px;
  width: 8px;
  height: 4px;
  border-radius: 2px;
  background: #9a9a9a;
}
.task.current {
  background: #2d2d2d;
}
.task.current::after {
  left: 16px;
  width: 21px;
  background: #66c9f2;
}
.folder {
  width: 228px;
  margin-left: 4px;
  margin-right: 11px;
}
.ndd {
  width: 235px;
  margin-right: 6px;
}
.myso {
  width: 108px;
}
.obs {
  width: 240px;
}
.tray {
  display: flex;
  align-items: center;
  margin-left: auto;
  padding-bottom: 6px;
}
.tray button {
  height: 40px;
}
.tray svg {
  width: 24px;
  height: 24px;
}
.up,
.plane {
  width: 42px;
}
.tray .ime {
  width: 44px;
  padding-top: 4px;
  font-size: 20px;
}
.green {
  width: 58px;
}
.system {
  gap: 8px;
  margin: 0 18px 0 10px;
}
.bell {
  width: 24px;
  margin-right: 24px;
}
</style>
